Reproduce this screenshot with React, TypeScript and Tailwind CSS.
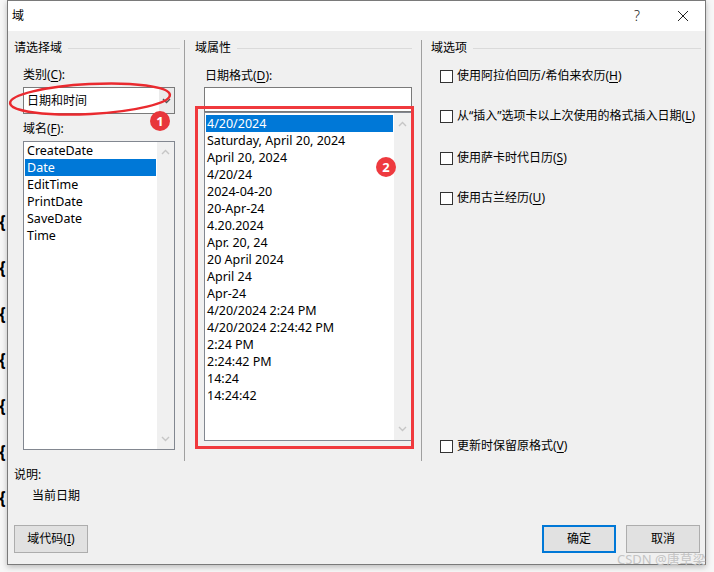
import type { ReactNode } from 'react'

const fields = ['CreateDate', 'Date', 'EditTime', 'PrintDate', 'SaveDate', 'Time']

const dates = [
  '4/20/2024',
  'Saturday, April 20, 2024',
  'April 20, 2024',
  '4/20/24',
  '2024-04-20',
  '20-Apr-24',
  '4.20.2024',
  'Apr. 20, 24',
  '20 April 2024',
  'April 24',
  'Apr-24',
  '4/20/2024 2:24 PM',
  '4/20/2024 2:24:42 PM',
  '2:24 PM',
  '2:24:42 PM',
  '14:24',
  '14:24:42',
]

function Key({ children }: { children: ReactNode }) {
  return <span className="underline underline-offset-[2px]">{children}</span>
}

function GroupTitle({ label, className }: { label: string; className: string }) {
  return (
    <div className={`flex h-4 items-center ${className}`}>
      <span>{label}</span>
      <span className="ml-[6px] h-px flex-1 bg-[#dadada]" />
    </div>
  )
}

function Chevron({ up, color }: { up?: boolean; color: string }) {
  return (
    <svg width="9" height="6" viewBox="0 0 9 6">
      <path d={up ? 'M1 5 L4.5 1.5 L8 5' : 'M1 1 L4.5 4.5 L8 1'} fill="none" stroke={color} strokeWidth="1.4" />
    </svg>
  )
}

function ScrollBar({ pad }: { pad: string }) {
  return (
    <div className={`flex w-[17px] flex-col items-center justify-between bg-[#f0f0f0] ${pad}`}>
      <Chevron up color="#c6c6c6" />
      <Chevron color="#c6c6c6" />
    </div>
  )
}

function Check({ children, className }: { children: ReactNode; className: string }) {
  return (
    <div className={`flex h-4 items-center pl-[18px] ${className}`}>
      <span className="h-[13px] w-[13px] border border-[#333333] bg-white" />
      <span className="ml-[4px] whitespace-nowrap">{children}</span>
    </div>
  )
}

export default function App() {
  return (
    <div className="relative flex h-[572px] w-[714px] overflow-hidden bg-[#f7f7f7] font-['Noto_Sans','Noto_Sans_CJK_SC',sans-serif] text-[12px] leading-4 text-black">
      {/* document behind the dialog */}
      <div className="flex w-[7px] flex-col items-start pt-[212px]">
        {[0, 1, 2, 3, 4, 5, 6].map((i) => (
          <span key={i} className="-ml-[1px] h-[46px] text-[17px] font-bold leading-5">
            {'{'}
          </span>
        ))}
      </div>

      <div className="flex h-[565px] w-[699px] flex-col border border-[#7a7a7a] bg-[#f0f0f0] shadow-[0_2px_6px_rgba(0,0,0,0.25)]">
        <div className="flex h-[30px] items-center bg-white pl-[4px]">
          <span>域</span>
          <span className="ml-auto mr-[37px] text-[14px] font-light text-[#222]">?</span>
          <svg width="12" height="12" viewBox="0 0 12 12" className="mr-[16px]">
            <path d="M1 1 L11 11 M11 1 L1 11" stroke="#222" strokeWidth="1" />
          </svg>
        </div>

        <div className="mt-[9px] flex h-[421px]">
          {/* left column */}
          <div className="flex w-[177px] flex-col border-r border-[#a0a0a0]">
            <GroupTitle label="请选择域" className="pl-[6px] pr-[4px]" />
            <div className="mt-[11px] pl-[15px]">
              类别(<Key>C</Key>):
            </div>
            <div className="ml-[15px] mt-[4px] flex h-[27px] w-[152px] border border-[#7a7a7a] bg-white">
              <span className="flex flex-1 items-center pl-[3px]">日期和时间</span>
              <span className="flex w-[15px] items-center justify-center bg-[#ebebeb]">
                <Chevron color="#555" />
              </span>
            </div>
            <div className="mt-[7px] pl-[15px]">
              域名(<Key>F</Key>):
            </div>
            <div className="ml-[15px] mt-[4px] flex h-[309px] w-[152px] border border-[#828790] bg-white">
              <div className="flex flex-1 flex-col text-[12.5px]">
                {fields.map((f) => (
                  <div
                    key={f}
                    className={
                      f === 'Date'
                        ? 'mx-[1px] h-[17px] bg-[#0078d7] pl-[2px] leading-[17px] text-white'
                        : 'mx-[1px] h-[17px] pl-[2px] leading-[17px]'
                    }
                  >
                    {f}
                  </div>
                ))}
              </div>
              <ScrollBar pad="py-[7px]" />
            </div>
          </div>

          {/* middle column */}
          <div className="flex w-[237px] flex-col border-r border-[#a0a0a0]">
            <GroupTitle label="域属性" className="pl-[10px] pr-[9px]" />
            <div className="mt-[12px] pl-[20px]">
              日期格式(<Key>D</Key>):
            </div>
            <div className="ml-[19px] mt-[3px] h-[25px] w-[208px] border border-[#7a7a7a] bg-white" />
            <div className="ml-[19px] flex h-[329px] w-[208px] border border-[#828790] bg-white">
              <div className="flex flex-1 flex-col pt-[2px] text-[12.5px]">
                {dates.map((d, i) => (
                  <div
                    key={d}
                    className={
                      i === 0
                        ? 'mx-[1px] h-[17px] whitespace-nowrap bg-[#0078d7] pl-[1px] leading-[17px] text-white'
                        : 'mx-[1px] h-[17px] whitespace-nowrap pl-[1px] leading-[17px]'
                    }
                  >
                    {d}
                  </div>
                ))}
              </div>
              <ScrollBar pad="py-[8px]" />
            </div>
          </div>

          {/* right column */}
          <div className="flex flex-1 flex-col">
            <GroupTitle label="域选项" className="pl-[9px] pr-[4px]" />
            <Check className="mt-[12px]">
              使用阿拉伯回历/希伯来农历(<Key>H</Key>)
            </Check>
            <Check className="mt-[24px]">
              从“插入”选项卡以上次使用的格式插入日期(<Key>L</Key>)
            </Check>
            <Check className="mt-[26px]">
              使用萨卡时代日历(<Key>S</Key>)
            </Check>
            <Check className="mt-[24px]">
              使用古兰经历(<Key>U</Key>)
            </Check>
            <Check className="mb-[7px] mt-auto">
              更新时保留原格式(<Key>V</Key>)
            </Check>
          </div>
        </div>

        <div className="mt-[6px] pl-[6px]">说明:</div>
        <div className="mt-[5px] pl-[24px]">当前日期</div>
        <div className="mt-[21px] flex pl-[6px] pr-[5px]">
          <button className="flex h-[28px] w-[74px] items-center justify-center border border-[#adadad] bg-[#e1e1e1]">
            域代码(<Key>I</Key>)
          </button>
          <button className="ml-auto flex h-[28px] w-[74px] items-center justify-center border-2 border-[#0078d7] bg-[#e1e1e1]">
            确定
          </button>
          <button className="ml-[10px] flex h-[28px] w-[74px] items-center justify-center border border-[#adadad] bg-[#e1e1e1]">
            取消
          </button>
        </div>
      </div>

      {/* annotations */}
      <svg className="pointer-events-none absolute left-0 top-0" width="714" height="572">
        <ellipse cx="90" cy="99" rx="80" ry="15" transform="rotate(-3 90 99)" fill="none" stroke="#ea2a2f" strokeWidth="2.5" />
        <rect x="196.5" y="107.5" width="216" height="340" fill="none" stroke="#f0393d" strokeWidth="3" />
      </svg>
      <span className="absolute left-[150px] top-[111px] flex h-[20px] w-[20px] items-center justify-center rounded-full bg-[#e8363b] text-[13px] font-bold text-white">
        1
      </span>
      <span className="absolute left-[376px] top-[157px] flex h-[20px] w-[20px] items-center justify-center rounded-full bg-[#ee3a3f] text-[13px] font-bold text-white">
        2
      </span>
      <span className="absolute left-[617px] top-[551px] text-[13px] text-[#c4c4c4]">CSDN @唐草梁</span>
    </div>
  )
}
